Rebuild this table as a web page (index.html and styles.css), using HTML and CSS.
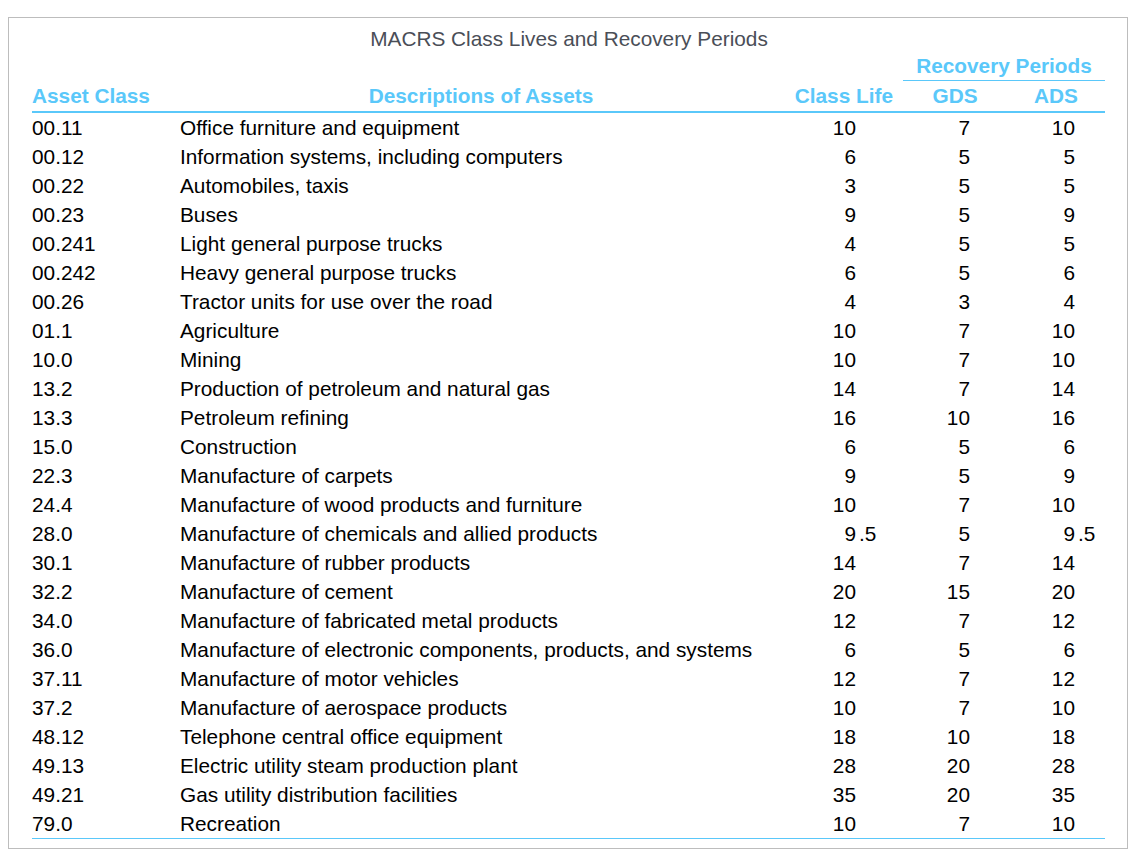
FILE: index.html
```html
<!DOCTYPE html>
<html lang="en">
<head>
<meta charset="utf-8">
<title>MACRS Class Lives and Recovery Periods</title>
<link rel="stylesheet" href="styles.css">
</head>
<body>
<div class="frame">
  <div class="title">MACRS Class Lives and Recovery Periods</div>
  <table class="macrs">
    <colgroup>
      <col class="c-class">
      <col class="c-desc">
      <col class="c-life">
      <col class="c-gds">
      <col class="c-ads">
    </colgroup>
    <thead>
      <tr class="hrow1">
        <th colspan="3"></th>
        <th colspan="2" class="rp">Recovery Periods</th>
      </tr>
      <tr class="hrow2">
        <th class="h-class">Asset Class</th>
        <th class="h-desc">Descriptions of Assets</th>
        <th class="h-life">Class Life</th>
        <th class="h-gds">GDS</th>
        <th class="h-ads">ADS</th>
      </tr>
    </thead>
    <tbody>
      <tr><td class="cls">00.11</td><td class="desc">Office furniture and equipment</td><td class="life">10</td><td class="gds">7</td><td class="ads">10</td></tr>
      <tr><td class="cls">00.12</td><td class="desc">Information systems, including computers</td><td class="life">6</td><td class="gds">5</td><td class="ads">5</td></tr>
      <tr><td class="cls">00.22</td><td class="desc">Automobiles, taxis</td><td class="life">3</td><td class="gds">5</td><td class="ads">5</td></tr>
      <tr><td class="cls">00.23</td><td class="desc">Buses</td><td class="life">9</td><td class="gds">5</td><td class="ads">9</td></tr>
      <tr><td class="cls">00.241</td><td class="desc">Light general purpose trucks</td><td class="life">4</td><td class="gds">5</td><td class="ads">5</td></tr>
      <tr><td class="cls">00.242</td><td class="desc">Heavy general purpose trucks</td><td class="life">6</td><td class="gds">5</td><td class="ads">6</td></tr>
      <tr><td class="cls">00.26</td><td class="desc">Tractor units for use over the road</td><td class="life">4</td><td class="gds">3</td><td class="ads">4</td></tr>
      <tr><td class="cls">01.1</td><td class="desc">Agriculture</td><td class="life">10</td><td class="gds">7</td><td class="ads">10</td></tr>
      <tr><td class="cls">10.0</td><td class="desc">Mining</td><td class="life">10</td><td class="gds">7</td><td class="ads">10</td></tr>
      <tr><td class="cls">13.2</td><td class="desc">Production of petroleum and natural gas</td><td class="life">14</td><td class="gds">7</td><td class="ads">14</td></tr>
      <tr><td class="cls">13.3</td><td class="desc">Petroleum refining</td><td class="life">16</td><td class="gds">10</td><td class="ads">16</td></tr>
      <tr><td class="cls">15.0</td><td class="desc">Construction</td><td class="life">6</td><td class="gds">5</td><td class="ads">6</td></tr>
      <tr><td class="cls">22.3</td><td class="desc">Manufacture of carpets</td><td class="life">9</td><td class="gds">5</td><td class="ads">9</td></tr>
      <tr><td class="cls">24.4</td><td class="desc">Manufacture of wood products and furniture</td><td class="life">10</td><td class="gds">7</td><td class="ads">10</td></tr>
      <tr><td class="cls">28.0</td><td class="desc">Manufacture of chemicals and allied products</td><td class="life">9<span class="frac">.5</span></td><td class="gds">5</td><td class="ads">9<span class="frac">.5</span></td></tr>
      <tr><td class="cls">30.1</td><td class="desc">Manufacture of rubber products</td><td class="life">14</td><td class="gds">7</td><td class="ads">14</td></tr>
      <tr><td class="cls">32.2</td><td class="desc">Manufacture of cement</td><td class="life">20</td><td class="gds">15</td><td class="ads">20</td></tr>
      <tr><td class="cls">34.0</td><td class="desc">Manufacture of fabricated metal products</td><td class="life">12</td><td class="gds">7</td><td class="ads">12</td></tr>
      <tr><td class="cls">36.0</td><td class="desc">Manufacture of electronic components, products, and systems</td><td class="life">6</td><td class="gds">5</td><td class="ads">6</td></tr>
      <tr><td class="cls">37.11</td><td class="desc">Manufacture of motor vehicles</td><td class="life">12</td><td class="gds">7</td><td class="ads">12</td></tr>
      <tr><td class="cls">37.2</td><td class="desc">Manufacture of aerospace products</td><td class="life">10</td><td class="gds">7</td><td class="ads">10</td></tr>
      <tr><td class="cls">48.12</td><td class="desc">Telephone central office equipment</td><td class="life">18</td><td class="gds">10</td><td class="ads">18</td></tr>
      <tr><td class="cls">49.13</td><td class="desc">Electric utility steam production plant</td><td class="life">28</td><td class="gds">20</td><td class="ads">28</td></tr>
      <tr><td class="cls">49.21</td><td class="desc">Gas utility distribution facilities</td><td class="life">35</td><td class="gds">20</td><td class="ads">35</td></tr>
      <tr class="last"><td class="cls">79.0</td><td class="desc">Recreation</td><td class="life">10</td><td class="gds">7</td><td class="ads">10</td></tr>
    </tbody>
  </table>
</div>
</body>
</html>
```
FILE: styles.css
```css
html, body {
  margin: 0;
  padding: 0;
  background: #ffffff;
}

body {
  font-family: "Liberation Sans", Arial, Helvetica, sans-serif;
  font-size: 20.8px;
  color: #000000;
}

.frame {
  box-sizing: border-box;
  width: 1120px;
  margin: 17px 0 0 8px;
  border: 1px solid #bdbdbd;
  padding: 9px 22px 9px 23px;
}

.title {
  text-align: center;
  line-height: 24px;
  color: #4a4e57;
  padding-left: 1px;
}

.macrs {
  width: 1073px;
  table-layout: fixed;
  border-collapse: separate;
  border-spacing: 0;
}

.c-class { width: 148px; }
.c-desc  { width: 602px; }
.c-life  { width: 121px; }
.c-gds   { width: 104px; }
.c-ads   { width: 98px; }

.macrs th,
.macrs td {
  padding: 0;
  white-space: nowrap;
  vertical-align: middle;
}

.macrs th {
  color: #5ac8fa;
  font-weight: bold;
}

.hrow1 th {
  line-height: 29px;
}

.hrow1 .rp {
  text-align: center;
  border-bottom: 1px solid #5ac8fa;
}

.hrow2 th {
  line-height: 30px;
  border-bottom: 2px solid #5ac8fa;
}

.h-class { text-align: left; }
.h-desc  { text-align: center; }
.h-life  { text-align: right; padding-right: 10px !important; }
.h-gds   { text-align: center; }
.h-ads   { text-align: center; }

.macrs td {
  line-height: 29px;
}

.cls  { text-align: left; }
.desc { text-align: left; }
.life { text-align: right; padding-right: 47px !important; }
.gds  { text-align: right; padding-right: 37px !important; }
.ads  { text-align: right; padding-right: 30px !important; }

.frac {
  display: inline-block;
  box-sizing: border-box;
  width: 20px;
  margin-right: -20px;
  padding-left: 3px;
  text-align: left;
}

.last td {
  border-bottom: 1px solid #5ac8fa;
}
```
